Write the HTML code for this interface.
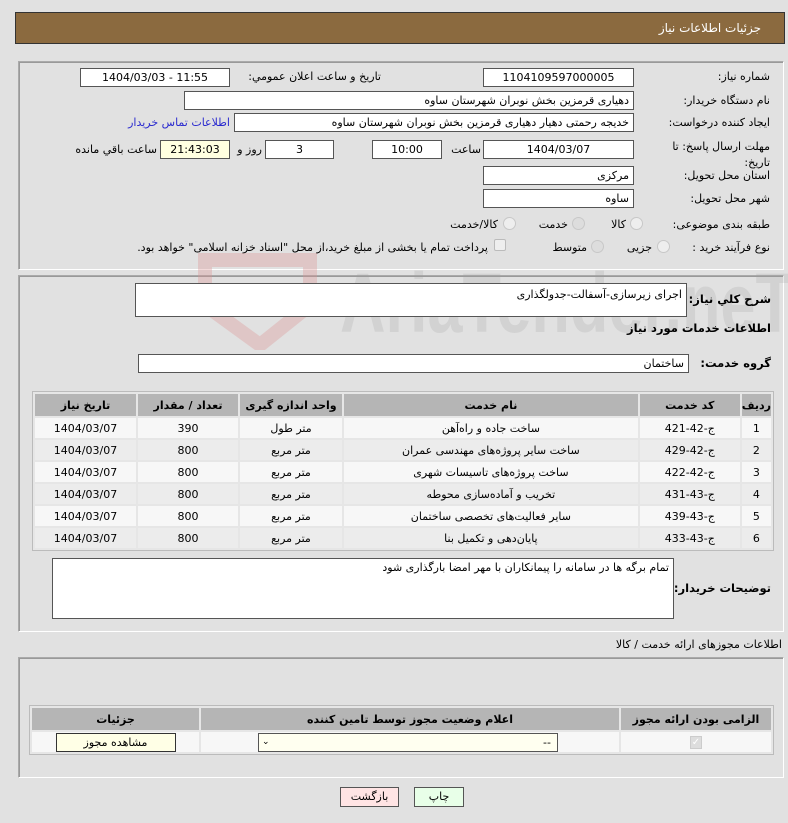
<!DOCTYPE html>
<html><head><meta charset="utf-8"><style>
*{box-sizing:border-box;margin:0;padding:0}
body{width:788px;height:823px;background:#e1e1e1;font-family:"DejaVu Sans",sans-serif;font-size:11px;color:#000;position:relative;overflow:hidden}
.a{position:absolute;white-space:nowrap}
.r{direction:rtl;text-align:right}
.in{position:absolute;background:#fff;border:1px solid #555;height:19px;line-height:17px;padding:0 4px;direction:rtl;text-align:right;white-space:nowrap;overflow:hidden}
.c{text-align:center}
.panel{position:absolute;border:1px solid #aaa;border-right-color:#fff;border-bottom-color:#fff;box-shadow:1px 1px 0 #999 inset}
.rad{position:absolute;width:13px;height:13px;border-radius:50%;border:1px solid #c8c8c8;background:#eee}
table{position:absolute;border-collapse:separate;border-spacing:2px;background:#e6e6e6;border:1px solid #bbb}
th{background:#b5b5b5;font-weight:bold;height:22px;font-size:11px}
td{height:20px;text-align:center;font-size:11px}
tr.o td{background:#f7f7f7}tr.e td{background:#ececec}
.lb{font-weight:bold;font-size:11.5px}
</style></head><body>
<div class="a" style="left:15px;top:12px;width:770px;height:32px;background:#8b6a3f;border:1px solid #333"></div>
<div class="a r" style="right:27px;top:21px;color:#fff;font-size:12px">جزئیات اطلاعات نیاز</div>

<div class="panel" style="left:18px;top:61px;width:766px;height:209px"></div>
<div class="a r" style="right:18px;top:70px">شماره نیاز:</div>
<div class="in c" style="left:483px;top:68px;width:151px;text-align:center">1104109597000005</div>
<div class="a r" style="left:236px;top:70px;width:145px">تاریخ و ساعت اعلان عمومي:</div>
<div class="in" style="left:80px;top:68px;width:150px;text-align:center;direction:ltr">1404/03/03 - 11:55</div>
<div class="a r" style="right:18px;top:94px">نام دستگاه خریدار:</div>
<div class="in" style="left:184px;top:91px;width:450px">دهیاری قرمزین بخش نوبران شهرستان ساوه</div>
<div class="a r" style="right:18px;top:116px">ایجاد کننده درخواست:</div>
<div class="in" style="left:234px;top:113px;width:400px">خدیجه رحمتی دهیار دهیاری قرمزین بخش نوبران شهرستان ساوه</div>
<div class="a r" style="left:120px;top:116px;width:110px;color:#2a2acf">اطلاعات تماس خریدار</div>
<div class="a r" style="right:18px;top:139px;line-height:16px;white-space:normal;width:125px">مهلت ارسال پاسخ: تا تاریخ:</div>
<div class="in" style="left:483px;top:140px;width:151px;text-align:center">1404/03/07</div>
<div class="a r" style="left:443px;top:143px;width:38px">ساعت</div>
<div class="in" style="left:372px;top:140px;width:70px;text-align:center">10:00</div>
<div class="in" style="left:265px;top:140px;width:69px;text-align:center">3</div>
<div class="a r" style="left:232px;top:143px;width:30px">روز و</div>
<div class="in" style="left:160px;top:140px;width:70px;text-align:center;background:#ffffe0">21:43:03</div>
<div class="a r" style="left:62px;top:143px;width:95px">ساعت باقي مانده</div>
<div class="a r" style="right:18px;top:169px">استان محل تحویل:</div>
<div class="in" style="left:483px;top:166px;width:151px">مرکزی</div>
<div class="a r" style="right:18px;top:192px">شهر محل تحویل:</div>
<div class="in" style="left:483px;top:189px;width:151px">ساوه</div>
<div class="a r" style="right:18px;top:218px">طبقه بندی موضوعی:</div>
<div class="rad" style="left:630px;top:217px"></div><div class="a r" style="left:596px;top:218px;width:30px">کالا</div>
<div class="rad" style="left:572px;top:217px;background:#ddd"></div><div class="a r" style="left:530px;top:218px;width:38px">خدمت</div>
<div class="rad" style="left:503px;top:217px"></div><div class="a r" style="left:438px;top:218px;width:60px">کالا/خدمت</div>
<div class="a r" style="right:18px;top:241px">نوع فرآیند خرید :</div>
<div class="rad" style="left:657px;top:240px"></div><div class="a r" style="left:616px;top:241px;width:36px">جزیی</div>
<div class="rad" style="left:591px;top:240px;background:#ddd"></div><div class="a r" style="left:545px;top:241px;width:42px">متوسط</div>
<div class="a" style="left:494px;top:239px;width:12px;height:12px;border:1px solid #bbb;background:#eee;border-radius:2px"></div>
<div class="a r" style="left:100px;top:241px;width:388px">پرداخت تمام یا بخشی از مبلغ خرید،از محل "اسناد خزانه اسلامی" خواهد بود.</div>

<div class="panel" style="left:18px;top:275px;width:766px;height:357px"></div>
<svg class="a" style="left:195px;top:250px" width="130" height="100"><path d="M10 10 L115 10 L115 55 L65 95 L10 55 Z" fill="none" stroke="rgba(220,150,150,.35)" stroke-width="14"/></svg>
<div class="a" style="left:340px;top:255px;font-size:84px;font-weight:bold;color:rgba(160,160,160,.22);font-family:'Liberation Sans',sans-serif;transform:scaleX(.75);transform-origin:left">AriaTender.neT</div>
<div class="a r lb" style="right:17px;top:292px">شرح کلي نیاز:</div>
<div class="in" style="left:135px;top:283px;width:552px;height:34px;line-height:22px">اجرای زیرسازی-آسفالت-جدولگذاری</div>
<div class="a r lb" style="right:17px;top:321px">اطلاعات خدمات مورد نیاز</div>
<div class="a r lb" style="right:17px;top:356px">گروه خدمت:</div>
<div class="in" style="left:138px;top:354px;width:551px">ساختمان</div>
<table style="left:32px;top:391px;width:742px;direction:rtl">
<tr><th style="width:29px">ردیف</th><th style="width:100px">کد خدمت</th><th>نام خدمت</th><th style="width:102px">واحد اندازه گیری</th><th style="width:100px">تعداد / مقدار</th><th style="width:101px">تاریخ نیاز</th></tr>
<tr class="o"><td>1</td><td>ج-42-421</td><td>ساخت جاده و راه‌آهن</td><td>متر طول</td><td>390</td><td>1404/03/07</td></tr>
<tr class="e"><td>2</td><td>ج-42-429</td><td>ساخت سایر پروژه‌های مهندسی عمران</td><td>متر مربع</td><td>800</td><td>1404/03/07</td></tr>
<tr class="o"><td>3</td><td>ج-42-422</td><td>ساخت پروژه‌های تاسیسات شهری</td><td>متر مربع</td><td>800</td><td>1404/03/07</td></tr>
<tr class="e"><td>4</td><td>ج-43-431</td><td>تخریب و آماده‌سازی محوطه</td><td>متر مربع</td><td>800</td><td>1404/03/07</td></tr>
<tr class="o"><td>5</td><td>ج-43-439</td><td>سایر فعالیت‌های تخصصی ساختمان</td><td>متر مربع</td><td>800</td><td>1404/03/07</td></tr>
<tr class="e"><td>6</td><td>ج-43-433</td><td>پایان‌دهی و تکمیل بنا</td><td>متر مربع</td><td>800</td><td>1404/03/07</td></tr>
</table>
<div class="a r lb" style="right:17px;top:581px">توضیحات خریدار:</div>
<div class="in" style="left:52px;top:558px;width:622px;height:61px;line-height:18px">تمام برگه ها  در سامانه را پیمانکاران با مهر امضا بارگذاری شود</div>

<div class="a r" style="right:6px;top:638px">اطلاعات مجوزهای ارائه خدمت / کالا</div>
<div class="panel" style="left:18px;top:657px;width:766px;height:121px"></div>
<table style="left:29px;top:705px;width:745px;direction:rtl">
<tr><th style="width:150px">الزامی بودن ارائه مجوز</th><th>اعلام وضعیت مجوز توسط تامین کننده</th><th style="width:167px">جزئیات</th></tr>
<tr class="o"><td><span style="display:inline-block;width:12px;height:13px;background:#ddd;border:1px solid #ccc;color:#fff;font-size:10px;line-height:11px">✓</span></td>
<td><div style="margin:0 auto 0 57px;width:300px;height:19px;border:1px solid #555;background:#fffff0;text-align:right;padding:0 6px;line-height:17px;position:relative">--<span style="position:absolute;left:3px;top:0;font-size:9px">⌄</span></div></td>
<td><div style="margin:0 auto;width:120px;height:19px;border:1px solid #333;background:#ffffe6;line-height:17px">مشاهده مجوز</div></td></tr>
</table>
<div class="a c" style="left:340px;top:787px;width:59px;height:20px;border:1px solid #555;background:#ffe4e4;line-height:18px">بازگشت</div>
<div class="a c" style="left:414px;top:787px;width:50px;height:20px;border:1px solid #555;background:#e8ffe8;line-height:18px">چاپ</div>
</body></html>
